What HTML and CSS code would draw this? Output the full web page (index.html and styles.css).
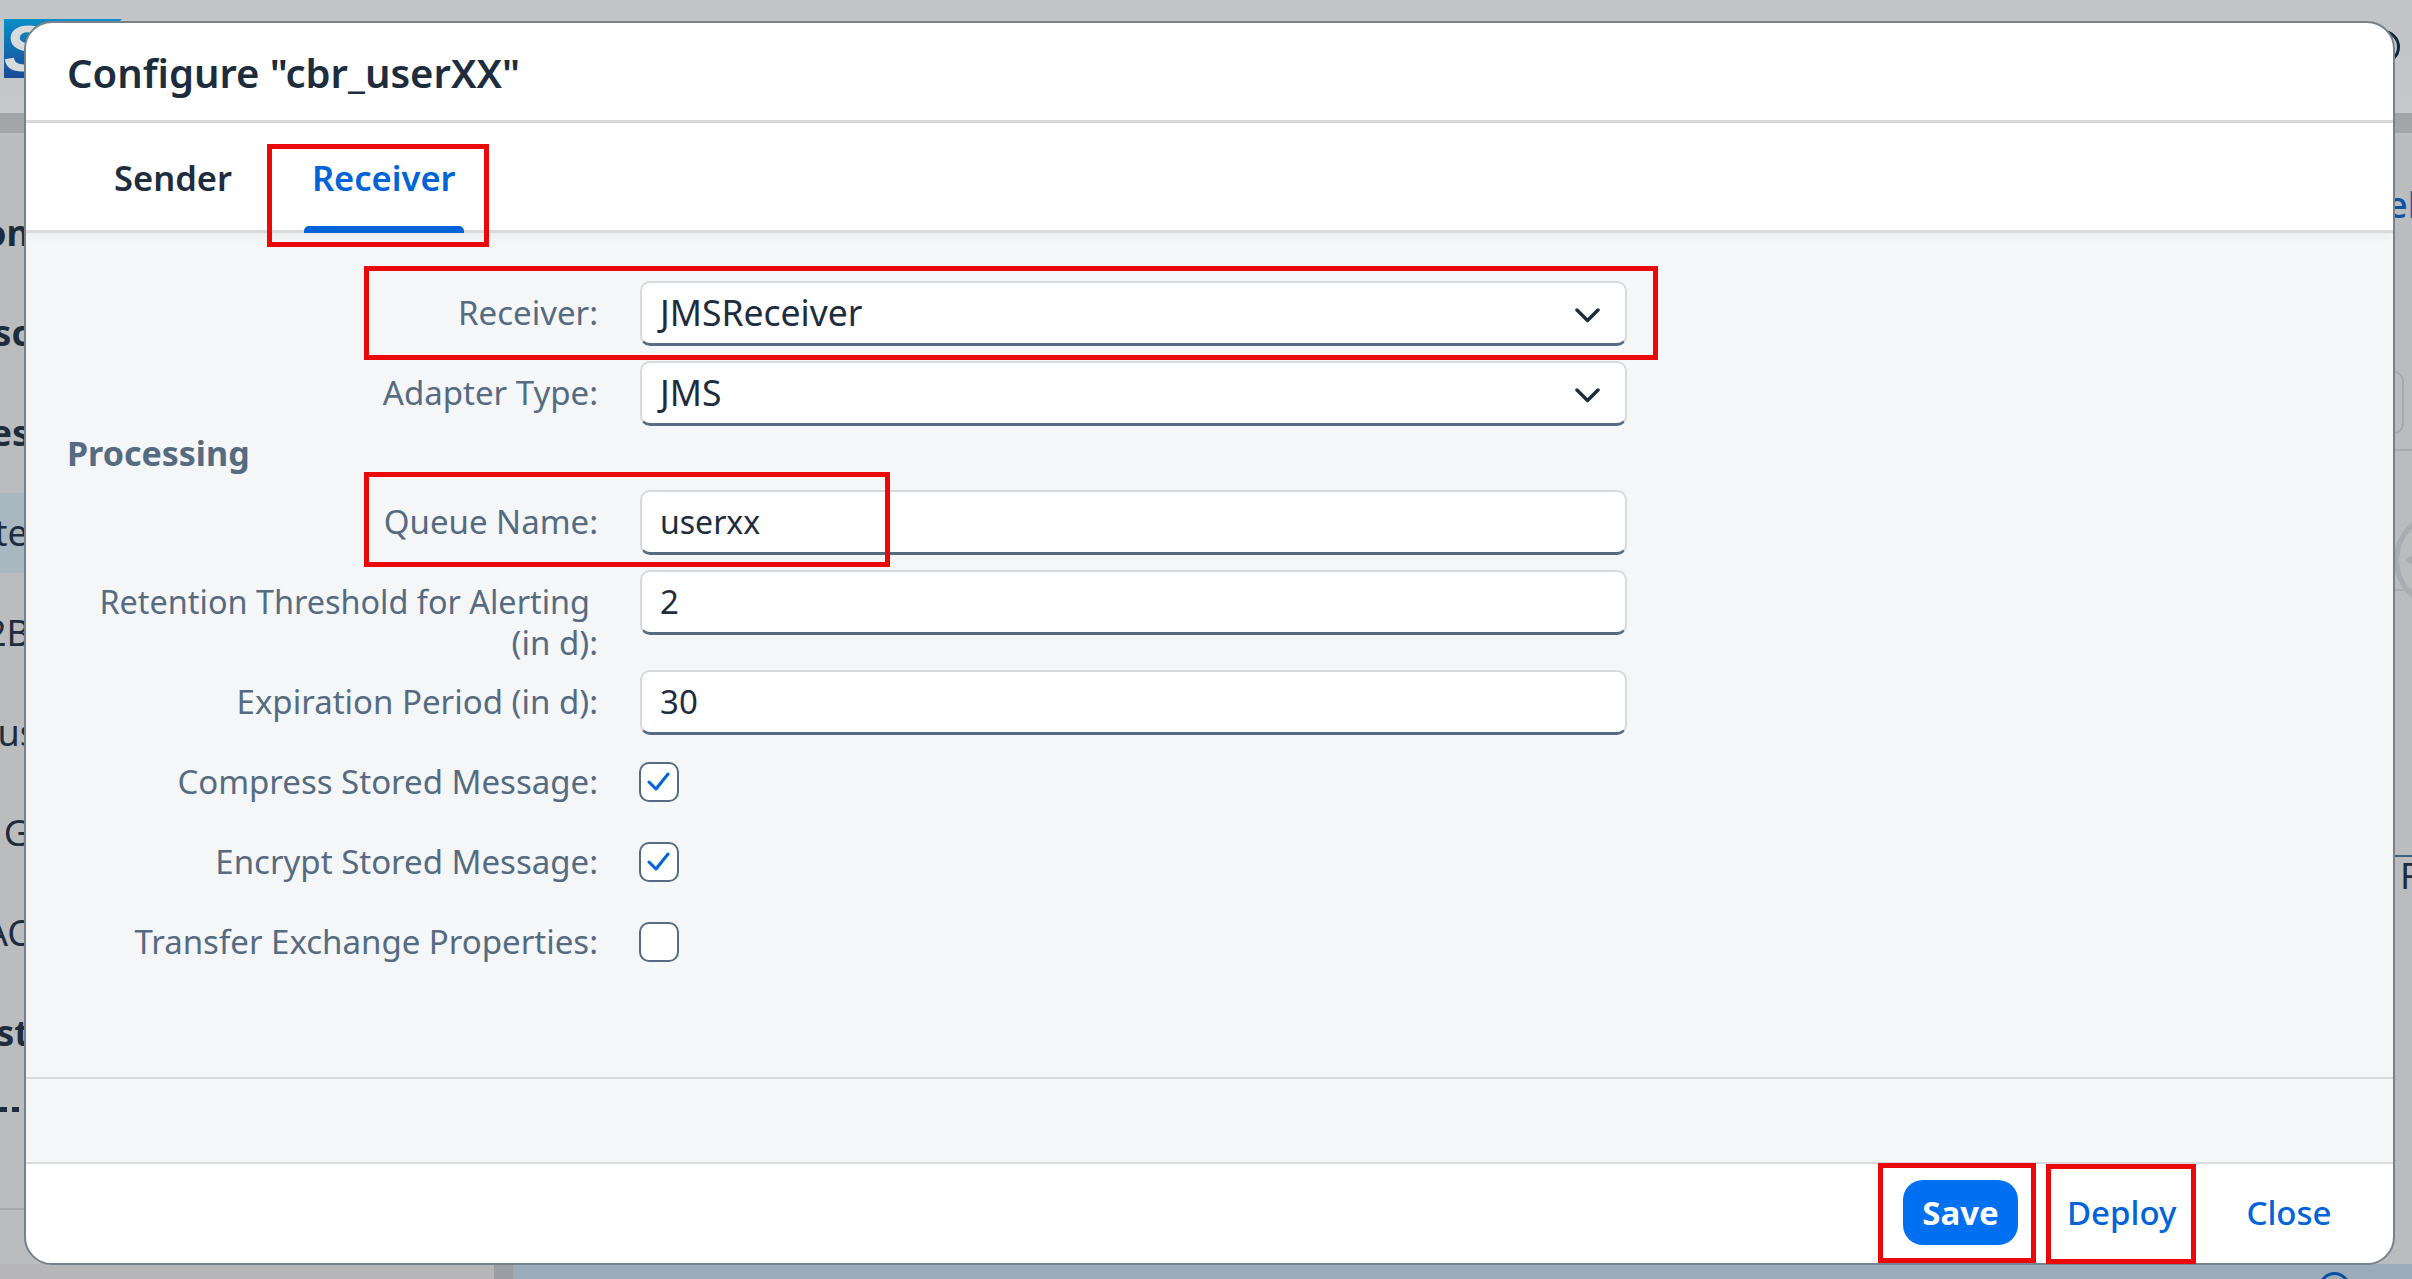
FILE: index.html
```html
<!DOCTYPE html>
<html lang="en">
<head>
    <meta charset="UTF-8">
    <meta name="viewport" content="width=device-width, initial-scale=1.0">
    <title>Configure cbr_userXX</title>
    <link rel="stylesheet" href="styles.css">
</head>
<body>
    <!-- dimmed page behind the dialog -->
    <div class="shell">
        <div class="shellHeader">
            <div class="logo"><span class="logoLetter">S</span></div>
            <div class="avatar"></div>
        </div>
        <div class="shellBand"></div>
        <div class="shellBody">
            <div class="rail">
                <div class="railItem railBold">on</div>
                <div class="railItem railBold">sc</div>
                <div class="railItem railBold">es</div>
                <div class="railItem railActive railLong">teg</div>
                <div class="railItem">2B</div>
                <div class="railItem railLong">ust</div>
                <div class="railItem">G</div>
                <div class="railItem">AC</div>
                <div class="railItem railBold">st</div>
                <div class="railCut"></div>
            </div>
            <div class="main">
                <div class="mainLink">el</div>
                <div class="mainField"></div>
                <div class="mainRow mainRowFirst">
                    <div class="mainDial"><div class="mainArrow"></div></div>
                </div>
                <div class="mainRow mainRowSecond"></div>
                <div class="mainRow mainRowBlue">R</div>
            </div>
        </div>
        <div class="shellFooter">
            <div class="footerLeft"></div>
            <div class="footerGap"></div>
            <div class="footerMain"><div class="footerRing"></div></div>
        </div>
    </div>

    <div class="dialog">
        <div class="dialogTitle">Configure "cbr_userXX"</div>
        <div class="tabBar">
            <div class="tab">Sender</div>
            <div class="tab tabActive">Receiver</div>
        </div>
        <div class="dialogBody">
            <div class="formRow">
                <label class="formLabel">Receiver:</label>
                <div class="formInput formInputCaps">JMSReceiver
                    <svg class="chevron" viewBox="0 0 25 15"><path d="M2 2l10.5 10.5L23 2"/></svg>
                </div>
            </div>
            <div class="formRow">
                <label class="formLabel">Adapter Type:</label>
                <div class="formInput formInputCaps">JMS
                    <svg class="chevron" viewBox="0 0 25 15"><path d="M2 2l10.5 10.5L23 2"/></svg>
                </div>
            </div>
            <h3 class="sectionTitle">Processing</h3>
            <div class="formRow">
                <label class="formLabel">Queue Name:</label>
                <div class="formInput formInputSmall">userxx</div>
            </div>
            <div class="formRow formRowTall">
                <label class="formLabel"><span class="wrapLine">Retention Threshold for Alerting</span><br>(in d):</label>
                <div class="formInput">2</div>
            </div>
            <div class="formRow">
                <label class="formLabel">Expiration Period (in d):</label>
                <div class="formInput">30</div>
            </div>
            <div class="formRow">
                <label class="formLabel">Compress Stored Message:</label>
                <div class="checkBox"><svg viewBox="0 0 24 22"><path d="M2 11l7 7L21 3"/></svg></div>
            </div>
            <div class="formRow">
                <label class="formLabel">Encrypt Stored Message:</label>
                <div class="checkBox"><svg viewBox="0 0 24 22"><path d="M2 11l7 7L21 3"/></svg></div>
            </div>
            <div class="formRow">
                <label class="formLabel">Transfer Exchange Properties:</label>
                <div class="checkBox"></div>
            </div>
        </div>
        <div class="emptyBar"></div>
        <div class="dialogFooter">
            <button class="btn btnSave">Save</button>
            <button class="btn btnDeploy">Deploy</button>
            <button class="btn btnClose">Close</button>
        </div>
    </div>

    <!-- red annotation boxes drawn on top of the screenshot -->
    <div class="mark markTab"></div>
    <div class="mark markReceiver"></div>
    <div class="mark markQueue"></div>
    <div class="mark markSave"></div>
    <div class="mark markDeploy"></div>
</body>
</html>
```

FILE: styles.css
```css
html, body {
    margin: 0;
    padding: 0;
}

body {
    width: 2412px;
    height: 1279px;
    overflow: hidden;
    position: relative;
    font-family: "Noto Sans", sans-serif;
    background-color: #bbbcbe;
    color: #1d2d3e;
}

/* page behind the dialog */
.shell {
    display: flex;
    flex-direction: column;
    height: 1279px;
}

.shellHeader {
    height: 113px;
    background: linear-gradient(#c3c4c5, #c6c7c8);
    display: flex;
    justify-content: space-between;
    padding: 19px 12px 0 4px;
    box-sizing: border-box;
}

.logo {
    width: 118px;
    height: 59px;
    background: linear-gradient(#0a8fc6, #1a4a9a);
    clip-path: polygon(0 0, 100% 0, 50% 100%, 0 100%);
    overflow: hidden;
}

.logoLetter {
    display: block;
    font-family: "Liberation Sans", sans-serif;
    font-size: 64px;
    line-height: 60px;
    font-weight: 700;
    font-style: italic;
    color: #d8dadc;
}

.avatar {
    width: 34px;
    height: 34px;
    margin-top: 11px;
    border: 3px solid #12263f;
    border-radius: 50%;
    box-sizing: border-box;
}

.shellBand {
    height: 20px;
    background-color: #a3a6a9;
}

.shellBody {
    flex: 1;
    display: flex;
    justify-content: space-between;
    overflow: hidden;
}

.rail {
    width: 60px;
    padding-top: 60px;
    border-bottom: 2px solid #a4a6a8;
    height: 1077px;
    box-sizing: border-box;
    overflow: hidden;
    background-color: #bbbcbe;
}

.railItem {
    height: 80px;
    margin-bottom: 20px;
    padding-right: 30px;
    display: flex;
    justify-content: flex-end;
    align-items: center;
    font-size: 36px;
    line-height: 80px;
    white-space: nowrap;
    color: #1d2d3e;
}

.railBold {
    font-weight: 700;
}

.railLong {
    padding-right: 10px;
}

.railActive {
    background-color: #a9b7c0;
}

.railCut {
    height: 5px;
    margin-top: 34px;
    background: repeating-linear-gradient(90deg, #1d2d3e 0, #1d2d3e 7px, transparent 7px, transparent 12px);
}

.main {
    width: 19px;
    font-size: 36px;
    overflow: hidden;
}

.mainLink {
    color: #0a54a8;
    font-weight: 500;
    height: 64px;
    line-height: 64px;
    margin: 40px 0 134px -6px;
    white-space: nowrap;
}

.mainField {
    width: 11px;
    height: 63px;
    box-sizing: border-box;
    border: 2px solid #a6a9ac;
    border-left: none;
    border-radius: 0 10px 10px 0;
    margin-bottom: 15px;
}

.mainRow {
    border-top: 2px solid #a9abad;
    box-sizing: border-box;
}

.mainRowFirst {
    height: 140px;
    position: relative;
}

.mainRowSecond {
    height: 90px;
}

.mainDial {
    position: absolute;
    left: 1px;
    top: 60px;
    width: 98px;
    height: 98px;
    border: 5px solid #a9adb1;
    border-radius: 50%;
    box-sizing: border-box;
}

.mainArrow {
    position: absolute;
    left: 6px;
    top: 36px;
    border-style: solid;
    border-width: 8px 12px 8px 0;
    border-color: transparent #a9adb1 transparent transparent;
}

.mainRowBlue {
    height: 60px;
    margin-top: 176px;
    border-top: 2px solid #3f5f80;
    padding: 4px 0 0 7px;
    line-height: 30px;
    color: #1d2d3e;
}

.shellFooter {
    height: 15px;
    display: flex;
    flex-shrink: 0;
}

.footerLeft {
    width: 494px;
    background-color: #b6b6b8;
}

.footerGap {
    width: 19px;
    background-color: #9a9ea3;
}

.footerMain {
    flex: 1;
    background-color: #9aabb9;
    padding: 8px 0 0 1806px;
    overflow: hidden;
}

.footerRing {
    width: 31px;
    height: 31px;
    border: 3px solid #0a4fa0;
    border-radius: 50%;
    box-sizing: border-box;
}

/* dialog */
.dialog {
    position: absolute;
    left: 24px;
    top: 21px;
    width: 2371px;
    height: 1244px;
    box-sizing: border-box;
    border: 2px solid #77818c;
    border-radius: 28px;
    background-color: #fff;
    overflow: hidden;
    display: flex;
    flex-direction: column;
}

.dialogTitle {
    height: 97px;
    padding: 0 41px;
    font-size: 40px;
    line-height: 100px;
    font-weight: 600;
    border-bottom: 3px solid #d9dadc;
    flex-shrink: 0;
}

.tabBar {
    height: 110px;
    display: flex;
    padding-left: 50px;
    gap: 34px;
    border-bottom: 3px solid #d9dadc;
    box-sizing: border-box;
    box-shadow: 0 4px 8px rgba(0, 0, 0, 0.04);
    position: relative;
    flex-shrink: 0;
}

.tab {
    padding: 0 38px;
    font-size: 34.5px;
    line-height: 110px;
    font-weight: 600;
    position: relative;
}

.tabActive {
    color: #0064d9;
    padding: 0 8px;
}

.tabActive::after {
    content: "";
    position: absolute;
    left: 0;
    right: 0;
    bottom: -3px;
    height: 7px;
    background-color: #0064d9;
    border-radius: 5px 5px 0 0;
}

.dialogBody {
    flex: 1;
    background-color: #f5f6f7;
    padding-top: 48px;
    border-bottom: 2px solid #d9dadc;
}

.formRow {
    display: flex;
    align-items: flex-start;
    min-height: 65px;
    margin-bottom: 15px;
}

.formRowTall {
    height: 85px;
}

.formLabel {
    width: 572px;
    flex-shrink: 0;
    text-align: right;
    font-size: 33px;
    line-height: 41px;
    padding-top: 11px;
    color: #556b82;
    white-space: nowrap;
}

.wrapLine {
    margin-right: 8px;
    font-size: 32.4px;
}

.formInput {
    width: 987px;
    height: 65px;
    margin-left: 42px;
    box-sizing: border-box;
    background-color: #fff;
    border: 2px solid #d5dadd;
    border-bottom: 3px solid #556b82;
    border-radius: 10px;
    padding: 0 18px;
    font-size: 33px;
    line-height: 59px;
    color: #1d2d3e;
    position: relative;
}

.formInputCaps {
    font-size: 35.5px;
}

.formInputSmall {
    font-size: 32px;
}

.chevron {
    position: absolute;
    right: 25px;
    top: 25px;
    width: 25px;
    height: 15px;
    fill: none;
    stroke: #1d2d3e;
    stroke-width: 3.5;
    stroke-linecap: round;
    stroke-linejoin: round;
}

.sectionTitle {
    margin: 0;
    height: 49px;
    padding: 0 0 0 41px;
    font-size: 34px;
    line-height: 24px;
    font-weight: 700;
    color: #556b82;
}

.checkBox {
    width: 40px;
    height: 40px;
    margin: 12px 0 0 41px;
    box-sizing: border-box;
    background-color: #fff;
    border: 2.5px solid #556b82;
    border-radius: 10px;
    display: flex;
    align-items: center;
    justify-content: center;
}

.checkBox svg {
    width: 24px;
    height: 22px;
    fill: none;
    stroke: #0064d9;
    stroke-width: 3;
    stroke-linecap: round;
    stroke-linejoin: round;
}

.emptyBar {
    height: 83px;
    background-color: #f5f6f7;
    border-bottom: 2px solid #d9dadc;
    flex-shrink: 0;
}

.dialogFooter {
    height: 99px;
    padding-bottom: 2px;
    display: flex;
    align-items: center;
    box-sizing: border-box;
    flex-shrink: 0;
}

.btn {
    font-family: inherit;
    font-size: 33px;
    font-weight: 500;
    border: none;
    background: none;
    color: #0064d9;
    padding: 0;
    height: 65px;
}

.btnSave {
    width: 115px;
    margin-left: 1877px;
    background-color: #0070f2;
    color: #fff;
    font-weight: 700;
    border-radius: 20px;
}

.btnDeploy {
    width: 107px;
    margin-left: 49px;
}

.btnClose {
    width: 86px;
    margin-left: 72px;
}

/* annotations */
.mark {
    position: absolute;
    box-sizing: border-box;
    border: 5px solid #ea0808;
}

.markTab {
    left: 267px;
    top: 144px;
    width: 222px;
    height: 103px;
}

.markReceiver {
    left: 364px;
    top: 266px;
    width: 1294px;
    height: 94px;
}

.markQueue {
    left: 364px;
    top: 472px;
    width: 526px;
    height: 95px;
}

.markSave {
    left: 1878px;
    top: 1163px;
    width: 158px;
    height: 100px;
}

.markDeploy {
    left: 2046px;
    top: 1164px;
    width: 150px;
    height: 100px;
}
```
